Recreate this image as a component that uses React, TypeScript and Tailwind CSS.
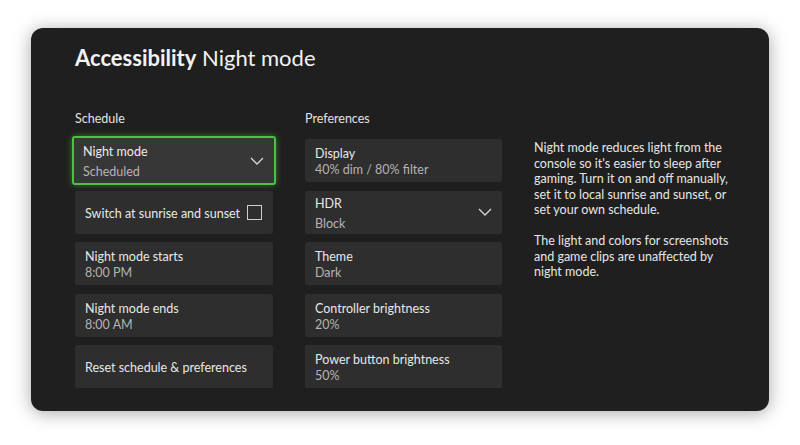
import React from 'react'

interface CardProps {
  title: string
  value?: string
  dropdown?: boolean
  checkbox?: boolean
  focused?: boolean
}

const Chevron = () => (
  <svg width="14" height="8" viewBox="0 0 14 8" fill="none" className="shrink-0">
    <polyline points="1,1 7,7 13,1" stroke="#d6d6d6" strokeWidth="1.3" fill="none" />
  </svg>
)

const Card: React.FC<CardProps> = ({ title, value, dropdown, checkbox, focused }) => {
  if (focused) {
    return (
      <div className="h-[43px] relative">
        <div className="absolute -inset-[3px] rounded-[3px] border-2 border-[#4fbf45] bg-[#373737] shadow-[0_0_6px_rgba(70,200,60,0.55)] flex items-center justify-between pl-[9px] pr-[10px]">
          <div className="flex flex-col pt-[3px]">
            <span className="text-[12.5px] leading-[20px] text-[#ececec]">{title}</span>
            <span className="text-[12.5px] leading-[20px] text-[#b4b4b4]">{value}</span>
          </div>
          <Chevron />
        </div>
      </div>
    )
  }
  return (
    <div className="h-[43px] rounded-[2px] bg-[#2e2e2e] flex items-center justify-between pl-[10px] pr-[10px]">
      <div className="flex flex-col pt-[3px]">
        <span className={`text-[12.5px] text-[#e8e8e8] ${dropdown ? 'leading-[20px]' : 'leading-[16px]'}`}>{title}</span>
        {value && (
          <span className={`text-[12.5px] text-[#b4b4b4] ${dropdown ? 'leading-[20px]' : 'leading-[16px]'}`}>{value}</span>
        )}
      </div>
      {dropdown && <Chevron />}
      {checkbox && <div className="w-[15px] h-[15px] border-[1.5px] border-[#cfcfcf] mr-[1px] shrink-0" />}
    </div>
  )
}

export default function App() {
  return (
    <div className="w-[800px] h-[445px] bg-white pt-[28px] pl-[31px]" style={{ fontFamily: 'Lato, "Noto Sans", sans-serif' }}>
      <div className="w-[738px] h-[383px] rounded-[12px] bg-[#1f1f1f] shadow-[0_2px_18px_rgba(0,0,0,0.35)] pl-[44px] pt-[16px]">
        <h1 className="text-[22px] leading-[28px] text-[#f2f2f2]">
          <span className="font-bold">Accessibility</span> <span>Night mode</span>
        </h1>

        <div className="flex mt-[39px]">
          <div className="w-[198px]">
            <div className="text-[12.5px] leading-[16px] text-[#e2e2e2] mb-[12px] pt-[1px] -mt-[1px]">Schedule</div>
            <div className="flex flex-col gap-[8.5px]">
              <Card title="Night mode" value="Scheduled" focused />
              <Card title="Switch at sunrise and sunset" checkbox />
              <Card title="Night mode starts" value="8:00 PM" />
              <Card title="Night mode ends" value="8:00 AM" />
              <Card title="Reset schedule & preferences" />
            </div>
          </div>

          <div className="w-[197px] ml-[32px]">
            <div className="text-[12.5px] leading-[16px] text-[#e2e2e2] mb-[12px] pt-[1px] -mt-[1px]">Preferences</div>
            <div className="flex flex-col gap-[8.5px]">
              <Card title="Display" value="40% dim / 80% filter" />
              <Card title="HDR" value="Block" dropdown />
              <Card title="Theme" value="Dark" />
              <Card title="Controller brightness" value="20%" />
              <Card title="Power button brightness" value="50%" />
            </div>
          </div>

          <div className="w-[200px] ml-[32px] pt-[29px] text-[12.5px] leading-[15.5px] text-[#e6e6e6]">
            <p>
              Night mode reduces light from the console so it's easier to sleep after gaming. Turn it on and off
              manually, set it to local sunrise and sunset, or set your own schedule.
            </p>
            <p className="mt-[15.5px]">
              The light and colors for screenshots and game clips are unaffected by night mode.
            </p>
          </div>
        </div>
      </div>
    </div>
  )
}
